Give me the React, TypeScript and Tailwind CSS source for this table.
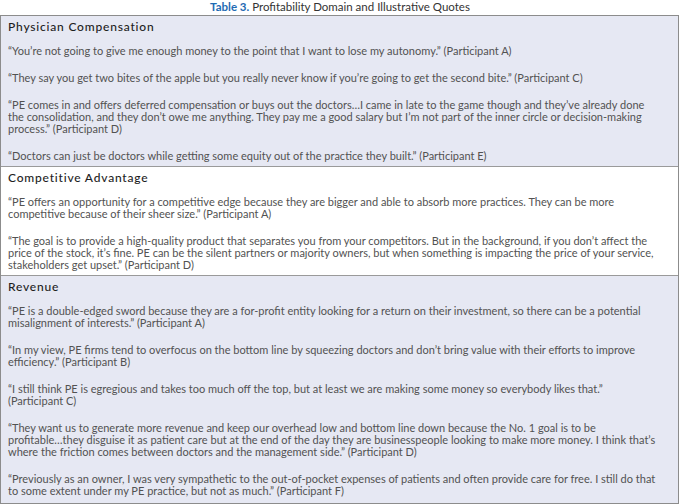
type Section = {
  title: string;
  tint: boolean;
  quotes: string[][];
};

const sections: Section[] = [
  {
    title: "Physician Compensation",
    tint: true,
    quotes: [
      [
        "“You’re not going to give me enough money to the point that I want to lose my autonomy.” (Participant A)",
      ],
      [
        "“They say you get two bites of the apple but you really never know if you’re going to get the second bite.” (Participant C)",
      ],
      [
        "“PE comes in and offers deferred compensation or buys out the doctors…I came in late to the game though and they’ve already done",
        "the consolidation, and they don’t owe me anything. They pay me a good salary but I’m not part of the inner circle or decision-making",
        "process.” (Participant D)",
      ],
      [
        "“Doctors can just be doctors while getting some equity out of the practice they built.” (Participant E)",
      ],
    ],
  },
  {
    title: "Competitive Advantage",
    tint: false,
    quotes: [
      [
        "“PE offers an opportunity for a competitive edge because they are bigger and able to absorb more practices. They can be more",
        "competitive because of their sheer size.” (Participant A)",
      ],
      [
        "“The goal is to provide a high-quality product that separates you from your competitors. But in the background, if you don’t affect the",
        "price of the stock, it’s fine. PE can be the silent partners or majority owners, but when something is impacting the price of your service,",
        "stakeholders get upset.” (Participant D)",
      ],
    ],
  },
  {
    title: "Revenue",
    tint: true,
    quotes: [
      [
        "“PE is a double-edged sword because they are a for-profit entity looking for a return on their investment, so there can be a potential",
        "misalignment of interests.” (Participant A)",
      ],
      [
        "“In my view, PE firms tend to overfocus on the bottom line by squeezing doctors and don’t bring value with their efforts to improve",
        "efficiency.” (Participant B)",
      ],
      [
        "“I still think PE is egregious and takes too much off the top, but at least we are making some money so everybody likes that.”",
        "(Participant C)",
      ],
      [
        "“They want us to generate more revenue and keep our overhead low and bottom line down because the No. 1 goal is to be",
        "profitable…they disguise it as patient care but at the end of the day they are businesspeople looking to make more money. I think that’s",
        "where the friction comes between doctors and the management side.” (Participant D)",
      ],
      [
        "“Previously as an owner, I was very sympathetic to the out-of-pocket expenses of patients and often provide care for free. I still do that",
        "to some extent under my PE practice, but not as much.” (Participant F)",
      ],
    ],
  },
];

function QuoteBlock({ section, last }: { section: Section; last: boolean }) {
  return (
    <div
      className={`px-[7px] pt-[4px] ${last ? "pb-[6px]" : "pb-[4px] border-b border-[#9a9a9a]"} ${
        section.tint ? "bg-[#e6e8f3]" : "bg-white"
      }`}
    >
      <h3 className="text-[12px] leading-[14px] font-medium tracking-[0.8px] text-[#1e1e1e]">
        {section.title}
      </h3>
      <div className="mt-[11px] flex flex-col gap-[15px]">
        {section.quotes.map((lines, i) => (
          <p key={i} className="text-[11px] leading-[12px] text-[#525252] whitespace-nowrap">
            {lines.map((line, j) => (
              <span key={j} className="block">
                {line}
              </span>
            ))}
          </p>
        ))}
      </div>
    </div>
  );
}

export default function App() {
  return (
    <div className="w-[680px] h-[504px] overflow-hidden bg-white font-['Lato',sans-serif]">
      <p className="h-[15px] text-center text-[11.5px] leading-[13px] text-[#333]">
        <span className="font-bold text-[#1f6bb3]">Table 3.</span> Profitability Domain and
        Illustrative Quotes
      </p>
      <div className="w-[679px] border border-[#8c8c8c]">
        {sections.map((s, i) => (
          <QuoteBlock key={s.title} section={s} last={i === sections.length - 1} />
        ))}
      </div>
    </div>
  );
}
